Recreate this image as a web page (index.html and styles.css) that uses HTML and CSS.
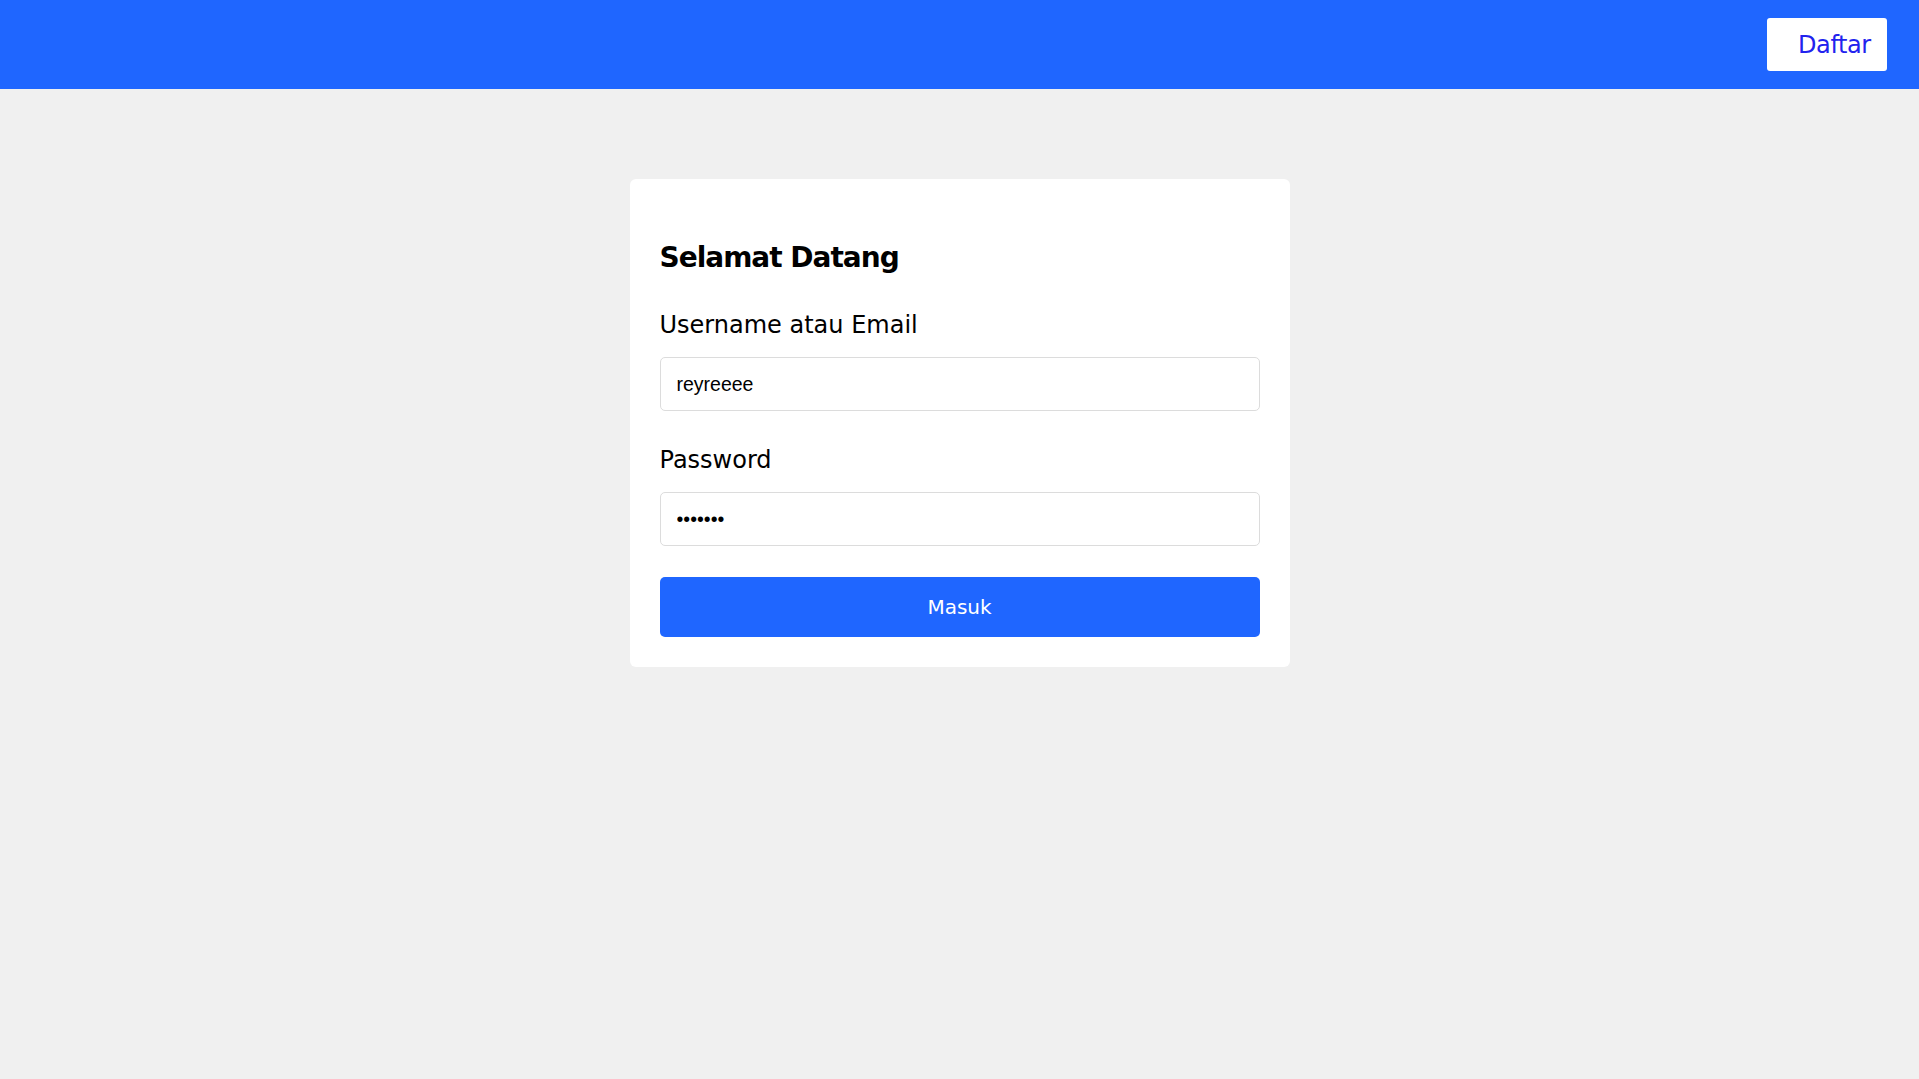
FILE: index.html
```html
<!DOCTYPE html>
<html lang="id">
<head>
<meta charset="utf-8">
<title>Masuk</title>
<link rel="stylesheet" href="styles.css">
</head>
<body>
<header class="topbar">
  <a class="btn-daftar" href="#">Daftar</a>
</header>
<main class="page">
  <form class="card" onsubmit="return false;">
    <h2 class="title">Selamat Datang</h2>
    <div class="field">
      <label class="label" for="user">Username atau Email</label>
      <input class="input" id="user" type="text" value="reyreeee">
    </div>
    <div class="field field-second">
      <label class="label" for="pass">Password</label>
      <input class="input" id="pass" type="password" value="1234567">
    </div>
    <button class="btn-masuk" type="submit">Masuk</button>
  </form>
</main>
</body>
</html>
```
FILE: styles.css
```css
* { box-sizing: border-box; }
html, body { margin: 0; padding: 0; }
body {
  background: #f0f0f0;
  font-family: "DejaVu Sans", "Noto Sans", sans-serif;
  color: #000;
  min-height: 100vh;
}
.topbar {
  height: 89px;
  background: #1f66ff;
  display: flex;
  justify-content: flex-end;
  align-items: center;
  padding-right: 32px;
}
.btn-daftar {
  display: flex;
  align-items: center;
  height: 53px;
  width: 120px;
  padding: 0 16px 0 31px;
  background: #fff;
  border-radius: 3px;
  color: #2222ee;
  text-decoration: none;
  font-size: 24px;
  letter-spacing: -0.4px;
  line-height: 1;
}
.page {
  display: flex;
  justify-content: center;
  padding-top: 90px;
}
.card {
  width: 660px;
  background: #fff;
  border-radius: 6px;
  padding: 30px;
  display: flex;
  flex-direction: column;
}
.title {
  margin: 32px 0 0;
  font-size: 28px;
  line-height: 34px;
  font-weight: 700;
  letter-spacing: -1px;
}
.field {
  display: flex;
  flex-direction: column;
  margin-top: 35px;
}
.field-second { margin-top: 34px; }
.label {
  font-size: 24px;
  line-height: 30px;
  margin-bottom: 17px;
}
.input {
  height: 54px;
  width: 100%;
  border: 1px solid #dcdcdc;
  border-radius: 5px;
  padding: 0 16px;
  font-family: "Liberation Sans", Arial, sans-serif;
  font-size: 19.5px;
  color: #000;
  background: #fff;
  outline: none;
}
.btn-masuk {
  margin-top: 31px;
  height: 60px;
  width: 100%;
  border: none;
  border-radius: 5px;
  background: #1f66ff;
  color: #fff;
  font-family: "DejaVu Sans", "Noto Sans", sans-serif;
  font-size: 20px;
  cursor: pointer;
}
```
